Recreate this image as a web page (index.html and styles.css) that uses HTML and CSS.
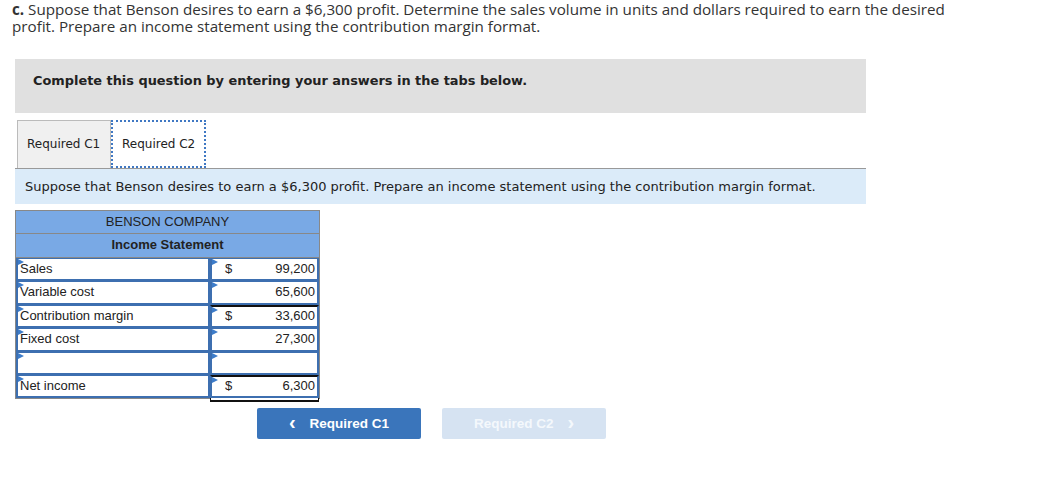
FILE: index.html
```html
<!DOCTYPE html>
<html>
<head>
<meta charset="utf-8">
<link rel="stylesheet" href="styles.css">
</head>
<body>
<div class="page">
  <p class="question"><b>c.</b> Suppose that Benson desires to earn a $6,300 profit. Determine the sales volume in units and dollars required to earn the desired profit. Prepare an income statement using the contribution margin format.</p>

  <div class="notice">Complete this question by entering your answers in the tabs below.</div>

  <div class="tabs">
    <div class="tab">Required C1</div>
    <div class="tab active">Required C2</div>
  </div>
  <div class="instruction">Suppose that Benson desires to earn a $6,300 profit. Prepare an income statement using the contribution margin format.</div>

  <div class="statement">
    <div class="head">BENSON COMPANY</div>
    <div class="head bold">Income Statement</div>
    <div class="row"><div class="lbl">Sales</div><div class="amt"><span class="cur">$</span><span>99,200</span></div></div>
    <div class="row"><div class="lbl">Variable cost</div><div class="amt"><span class="cur"></span><span>65,600</span></div></div>
    <div class="row"><div class="lbl">Contribution margin</div><div class="amt top"><span class="cur">$</span><span>33,600</span></div></div>
    <div class="row"><div class="lbl">Fixed cost</div><div class="amt"><span class="cur"></span><span>27,300</span></div></div>
    <div class="row"><div class="lbl"></div><div class="amt"><span class="cur"></span><span></span></div></div>
    <div class="row"><div class="lbl">Net income</div><div class="amt top dbl"><span class="cur">$</span><span>6,300</span></div></div>
  </div>

  <div class="nav">
    <div class="btn prev"><span class="chev">&lsaquo;</span>Required C1</div>
    <div class="btn next">Required C2<span class="chev">&rsaquo;</span></div>
  </div>
</div>
</body>
</html>
```
FILE: styles.css
```css
* { box-sizing: border-box; }
body { margin: 0; background: #fff; }
.page { padding: 0 0 0 12px; width: 1040px; }
.question {
  margin: 0; padding-top: 1px;
  font-family: "Open Sans", "Liberation Sans", sans-serif;
  font-size: 15.2px; line-height: 17px; color: #333; width: 935px;
  letter-spacing: 0;
}
.question b { font-weight: 700; }
.notice {
  margin: 24px 0 0 3px; width: 851px; height: 54px;
  background: #e0e0e0;
  font-family: "DejaVu Sans", Verdana, sans-serif; font-weight: bold;
  font-size: 12.9px; color: #222;
  padding: 14px 0 0 18px;
}
.tabs { display: flex; margin: 7px 0 0 5px; height: 48px; }
.tab {
  width: 94px; height: 48px; border: 1px solid #bbb; border-bottom: none;
  background: #f0f0f0;
  font-family: "DejaVu Sans", Verdana, sans-serif; font-size: 12px; color: #222;
  padding: 16px 0 0 9px;
}
.tab.active { background: #fff; border: 2px dotted #3f78c3; width: 95px; padding-left: 9px; padding-top: 15px; }
.instruction {
  margin-left: 3px; width: 851px; height: 36px;
  border-top: 1px solid #999;
  background: #dbebf9;
  font-family: "DejaVu Sans", Verdana, sans-serif; font-size: 13px; color: #222;
  padding: 10px 0 0 10px;
}
.statement {
  margin: 6px 0 0 3px; width: 305px;
  border: 1px solid #888;
  font-family: "Liberation Sans", Arial, sans-serif; font-size: 13px; color: #222;
}
.head { height: 23px; background: #79a9e5; border-bottom: 1px solid #888; text-align: center; line-height: 22px; }
.head.bold { font-weight: bold; height: 24px; }
.row { display: flex; height: 23.4px; }
.lbl, .amt { position: relative; background: #fff; border: 2px solid #3d6fb0; border-top-width: 1px; }
.lbl { width: 194px; padding: 1px 0 0 2px; line-height: 17px; }
.amt { flex: 1; display: flex; justify-content: space-between; padding: 1px 2px 0 13px; line-height: 17px; }
.amt.top { border-top: 2px solid #111; padding-top: 0; }
.amt.dbl { box-shadow: 0 3px 0 -1px #fff, 0 4px 0 0 #111; }
.lbl::before, .amt::before {
  content: ""; position: absolute; left: 0; top: 0;
  border-left: 6px solid #3d7cc9; border-top: 3px solid transparent; border-bottom: 3px solid transparent;
}
.cur { width: 10px; }
.nav { display: flex; gap: 21px; margin: 9px 0 0 245px; }
.btn {
  width: 164px; height: 31px; border-radius: 2px;
  font-family: "Liberation Sans", Arial, sans-serif; font-weight: bold; font-size: 13.5px;
  display: flex; align-items: center; justify-content: center; color: #fff;
}
.prev { background: #3a75bb; }
.prev .chev { margin-right: 14px; }
.next { background: #d6e3f2; color: #f4f8fc; }
.next .chev { margin-left: 14px; }
.chev { font-size: 20px; font-weight: bold; line-height: 1; margin-top: -3px; }
```
